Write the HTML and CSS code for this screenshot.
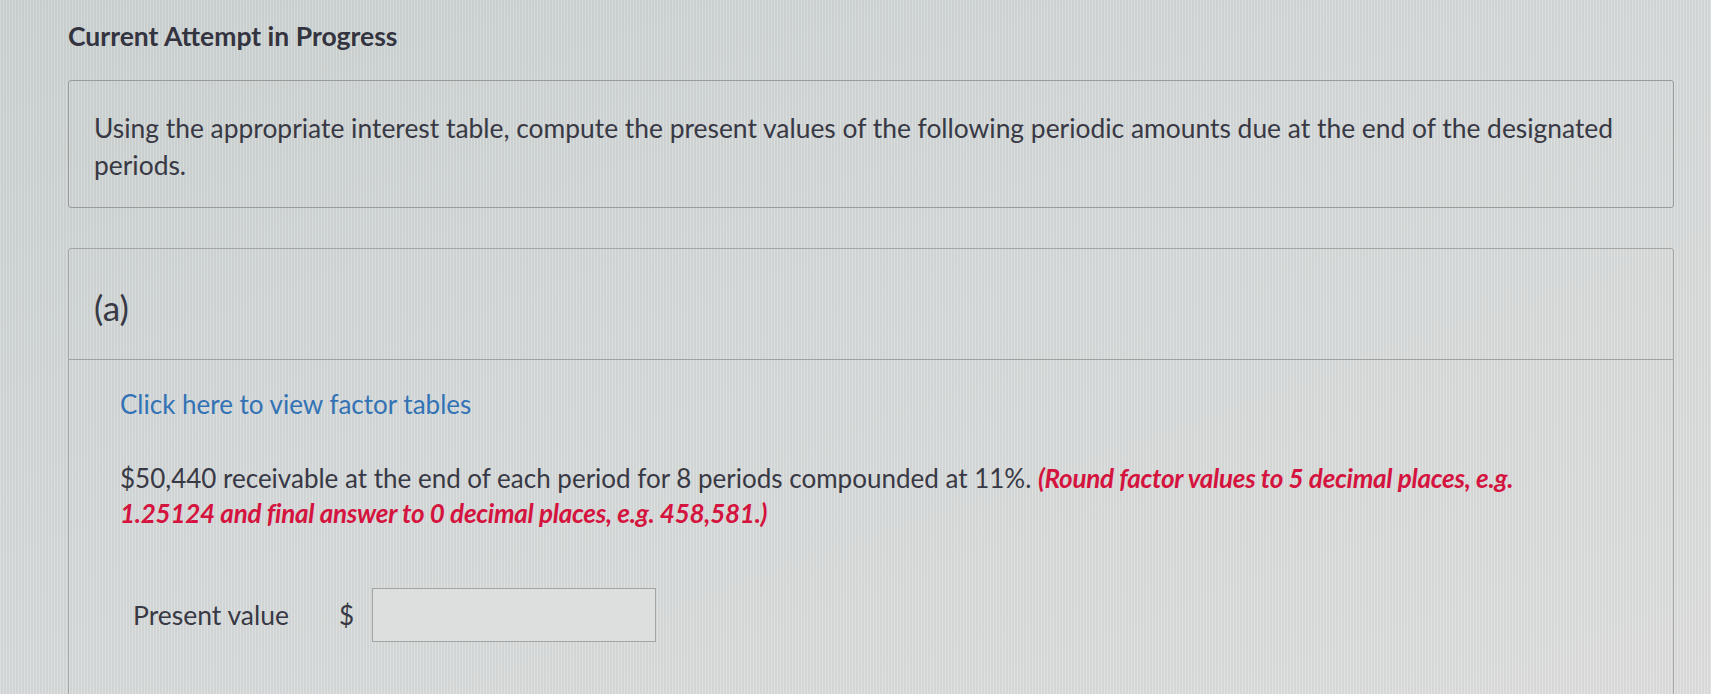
FILE: index.html
```html
<!DOCTYPE html>
<html>
<head>
<meta charset="utf-8">
<link rel="stylesheet" href="styles.css">
</head>
<body>
<div class="page">
  <h1 class="title">Current Attempt in Progress</h1>
  <div class="intro-box">
    <p class="intro">Using the appropriate interest table, compute the present values of the following periodic amounts due at the end of the designated periods.</p>
  </div>
  <div class="part-box">
    <div class="part-head">(a)</div>
    <div class="part-body">
      <a class="link" href="#">Click here to view factor tables</a>
      <p class="question">$50,440 receivable at the end of each period for 8 periods compounded at 11%. <em class="note">(Round factor values to 5 decimal places, e.g. 1.25124 and final answer to 0 decimal places, e.g. 458,581.)</em></p>
      <div class="answer-row">
        <span class="label">Present value</span>
        <span class="currency">$</span>
        <span class="input"></span>
      </div>
    </div>
  </div>
</div>
</body>
</html>
```

FILE: styles.css
```css
html, body {
  margin: 0;
  padding: 0;
}
body {
  width: 1711px;
  height: 694px;
  overflow: hidden;
  font-family: Lato, "Open Sans", sans-serif;
  color: #383945;
  background-color: #d5d8d8;
  background-image:
    repeating-linear-gradient(90deg, rgba(255,255,255,0.12) 0 1px, rgba(0,0,0,0.035) 1px 3px),
    linear-gradient(160deg, #cdd4d3 0%, #d7dbdb 45%, #dfe0df 100%);
}
.page {
  padding: 20px 37px 0 68px;
}
.title {
  margin: 0;
  font-size: 26.5px;
  line-height: 32px;
  font-weight: 700;
  color: #33343f;
}
.intro-box {
  margin-top: 28px;
  height: 126px;
  border: 1px solid #9a9c9c;
  border-radius: 3px;
  padding: 0 25px;
}
.intro {
  margin: 29px 0 0;
  font-size: 26.4px;
  line-height: 37px;
}
.part-box {
  margin-top: 40px;
  border: 1px solid #a4a6a6;
  border-radius: 3px;
  height: 500px;
}
.part-head {
  height: 111px;
  padding-left: 25px;
  font-size: 35px;
  line-height: 116px;
  border-bottom: 1px solid #a0a2a2;
  box-sizing: border-box;
}
.part-body {
  padding: 27px 0 0 51px;
}
.link {
  display: block;
  font-size: 26px;
  line-height: 34px;
  color: #3272b5;
  text-decoration: none;
}
.question {
  margin: 40px 0 0;
  font-size: 26px;
  line-height: 35px;
  max-width: 1420px;
}
.note {
  color: #d4143e;
  font-weight: 700;
  font-style: italic;
  letter-spacing: -0.25px;
}
.answer-row {
  display: flex;
  align-items: center;
  margin-top: 57px;
  padding-left: 13px;
}
.label {
  font-size: 26.5px;
  width: 206px;
}
.currency {
  font-size: 26px;
  width: 33px;
}
.input {
  width: 282px;
  height: 52px;
  border: 1px solid #a3a5a5;
  background: #dcdfde;
}
```
